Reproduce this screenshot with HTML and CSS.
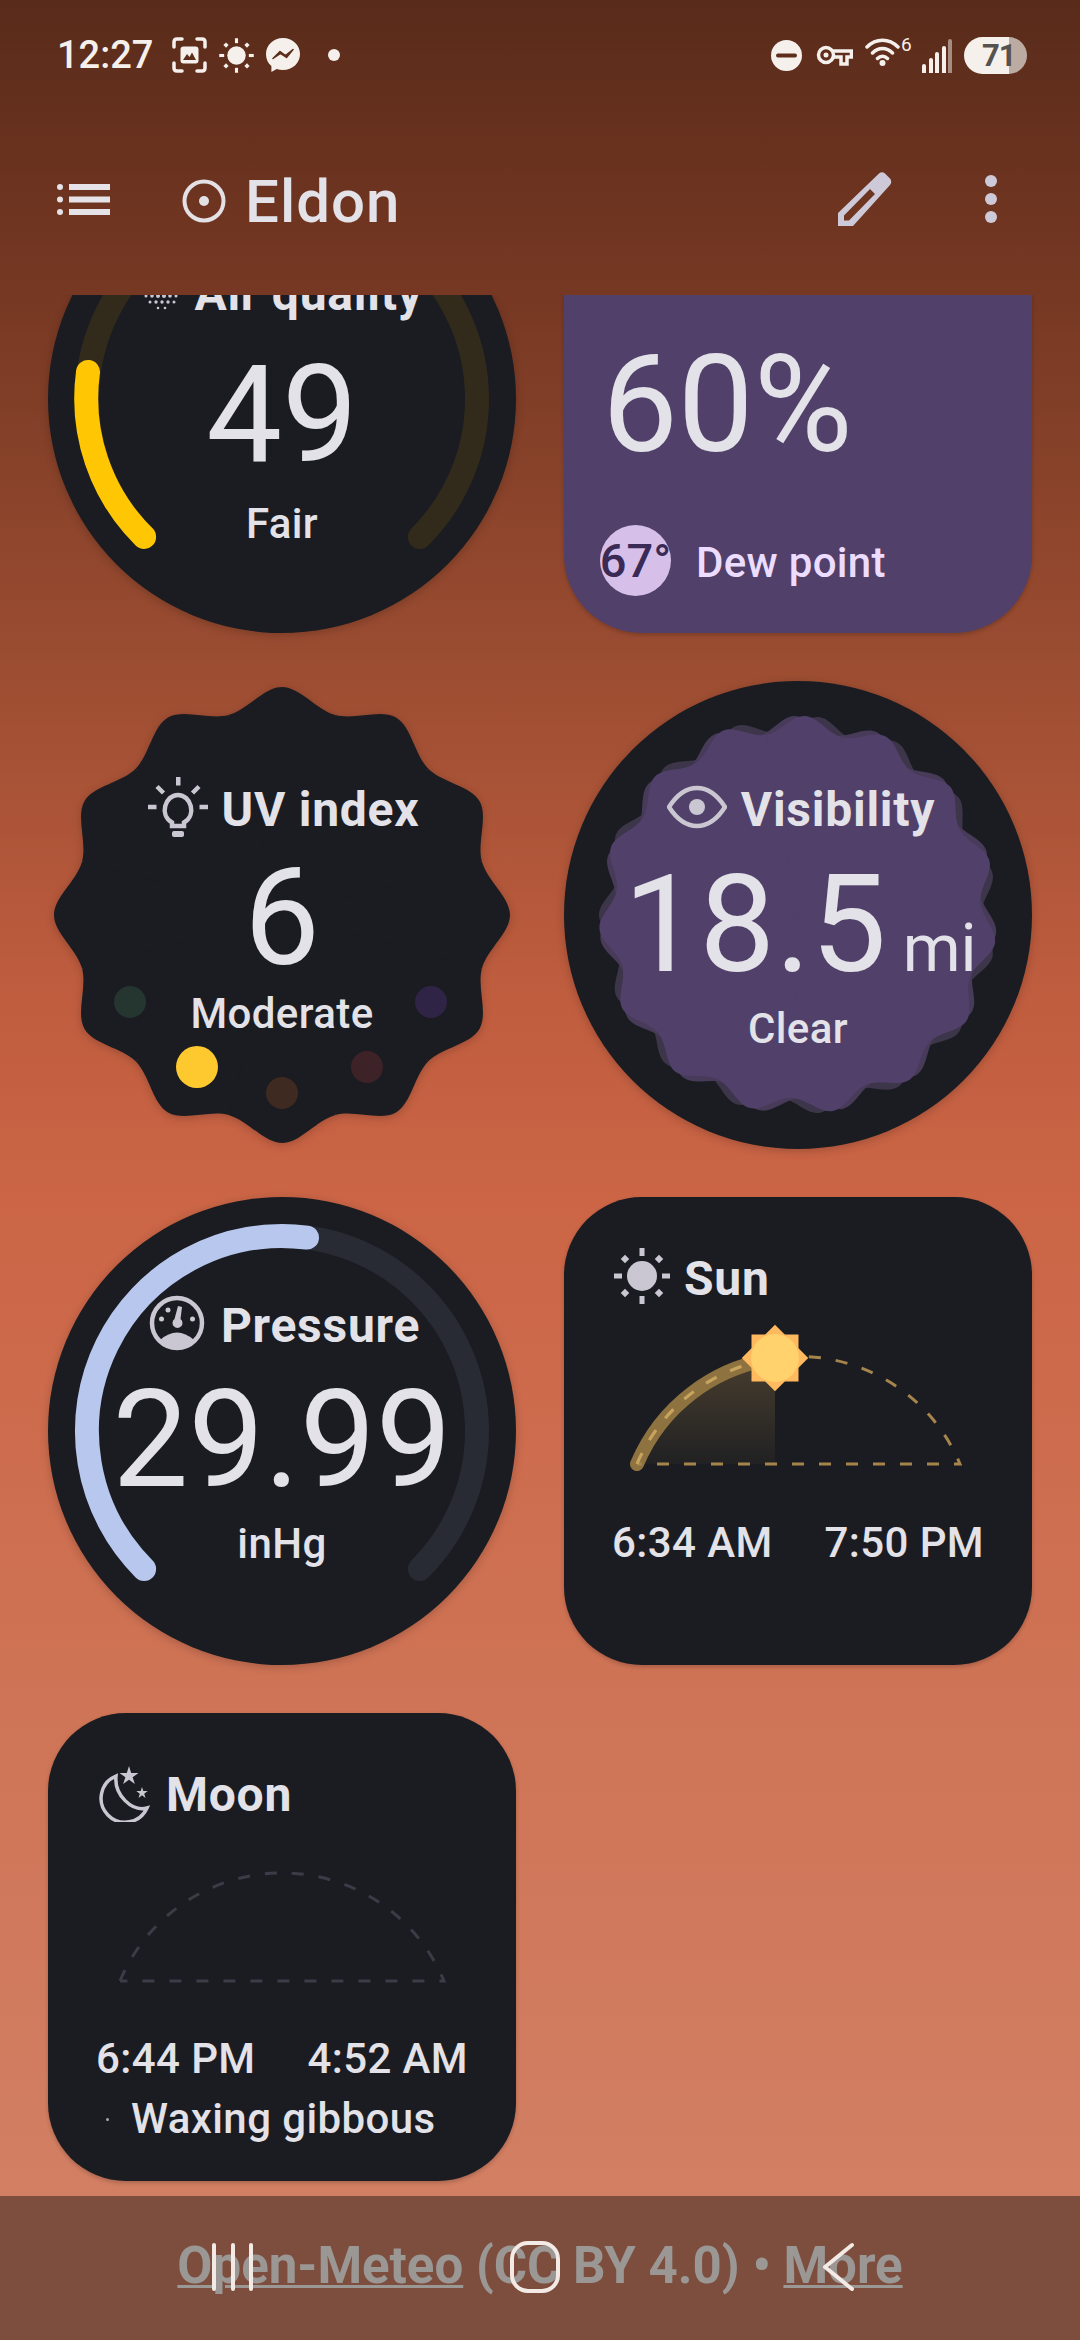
FILE: index.html
```html
<!DOCTYPE html>
<html lang="en">
<head>
  <meta charset="UTF-8" />
  <meta name="viewport" content="width=device-width, initial-scale=1.0" />
  <title>Eldon</title>
  <link rel="stylesheet" href="styles.css">
</head>
<body>
  <!-- shapes shared by the tiles -->
  <svg class="defs" width="0" height="0" aria-hidden="true">
    <defs>
      <path id="lobe-big" d="M-53.6 -199.9C-34.3 -205.1 -18 -228 0 -228C18 -228 34.3 -205.1 53.6 -199.9L0 0Z"/>
      <path id="lobe-soft" d="M-38 -179C-23.500 -182 -13 -199 0 -199C13 -199 23.500 -182 38 -179L0 0Z"/>
      <g id="burst">
        <circle r="204"/>
        <use href="#lobe-big"/><use href="#lobe-big" transform="rotate(30)"/><use href="#lobe-big" transform="rotate(60)"/>
        <use href="#lobe-big" transform="rotate(90)"/><use href="#lobe-big" transform="rotate(120)"/><use href="#lobe-big" transform="rotate(150)"/>
        <use href="#lobe-big" transform="rotate(180)"/><use href="#lobe-big" transform="rotate(210)"/><use href="#lobe-big" transform="rotate(240)"/>
        <use href="#lobe-big" transform="rotate(270)"/><use href="#lobe-big" transform="rotate(300)"/><use href="#lobe-big" transform="rotate(330)"/>
      </g>
      <g id="cloud">
        <circle r="180"/>
        <use href="#lobe-soft"/><use href="#lobe-soft" transform="rotate(24)"/><use href="#lobe-soft" transform="rotate(48)"/>
        <use href="#lobe-soft" transform="rotate(72)"/><use href="#lobe-soft" transform="rotate(96)"/><use href="#lobe-soft" transform="rotate(120)"/>
        <use href="#lobe-soft" transform="rotate(144)"/><use href="#lobe-soft" transform="rotate(168)"/><use href="#lobe-soft" transform="rotate(192)"/>
        <use href="#lobe-soft" transform="rotate(216)"/><use href="#lobe-soft" transform="rotate(240)"/><use href="#lobe-soft" transform="rotate(264)"/>
        <use href="#lobe-soft" transform="rotate(288)"/><use href="#lobe-soft" transform="rotate(312)"/><use href="#lobe-soft" transform="rotate(336)"/>
      </g>
      <g id="sun-glyph">
        <circle cx="30" cy="30" r="15"/>
        <rect x="27.5" y="2" width="5" height="8"/>
        <rect x="27.5" y="50" width="5" height="8"/>
        <rect x="2" y="27.5" width="8" height="5"/>
        <rect x="50" y="27.5" width="8" height="5"/>
        <rect x="10" y="10" width="6" height="6" transform="rotate(45 13 13)"/>
        <rect x="44" y="10" width="6" height="6" transform="rotate(45 47 13)"/>
        <rect x="10" y="44" width="6" height="6" transform="rotate(45 13 47)"/>
        <rect x="44" y="44" width="6" height="6" transform="rotate(45 47 47)"/>
      </g>
    </defs>
  </svg>

  <div class="phone">
    <!-- status bar -->
    <div class="statusbar">
      <div class="status-left">
        <span class="clock">12:27</span>
        <svg class="st-icon" width="35" height="36" viewBox="0 0 35 36">
          <path class="st-line" d="M2 10V5Q2 2 5 2H10M25 2H30Q33 2 33 5V10M33 26V31Q33 34 30 34H25M10 34H5Q2 34 2 31V26"/>
          <rect class="st-fill" x="8.5" y="9.5" width="18" height="17" rx="3"/>
          <path class="st-cut" d="M11 23L15 17L17.5 20L20 15.5L24 23Z"/>
        </svg>
        <svg class="st-icon st-sun" width="37" height="37" viewBox="0 0 60 60"><use href="#sun-glyph"/></svg>
        <svg class="st-icon" width="34" height="34" viewBox="0 0 34 34">
          <path class="st-fill" d="M17 0C7.5 0 0 7 0 16.2C0 21 2 25.200 5.400 28.100V34L10.700 31C12.600 31.600 14.700 32 17 32C26.500 32 34 25 34 16C34 7 26.500 0 17 0Z"/>
          <path class="st-cut-line" d="M7 20.500L14 13.500L19.500 17.500L27 11.500L20.500 19.500L14.500 15.500Z"/>
        </svg>
        <span class="st-dot"></span>
      </div>
      <div class="status-right">
        <svg class="st-icon" width="31" height="31" viewBox="0 0 31 31">
          <circle class="st-fill" cx="15.500" cy="15.500" r="15.500"/>
          <rect class="st-cut" x="5" y="13.500" width="21" height="4" rx="2"/>
        </svg>
        <svg class="st-icon st-key" width="37" height="24" viewBox="0 0 37 24">
          <circle class="st-line" cx="10" cy="12" r="7.500"/>
          <circle class="st-fill" cx="10" cy="12" r="2.500"/>
          <path class="st-line" d="M17.500 8H35.500V14H31V21H25V14H17.500"/>
        </svg>
        <div class="wifi">
          <svg width="35" height="31" viewBox="0 0 35 31">
            <path class="st-line" d="M2 11C11 2 24 2 33 11M7.500 17C13.500 11 21.500 11 27.500 17M12.500 22.500C15.500 19.500 19.500 19.500 22.500 22.500"/>
            <circle class="st-fill" cx="17.500" cy="27" r="3"/>
          </svg>
          <span class="wifi-num">6</span>
        </div>
        <div class="signal">
          <span class="bar bar1"></span><span class="bar bar2"></span><span class="bar bar3"></span><span class="bar bar4"></span><span class="bar bar5"></span>
        </div>
        <div class="battery"><span class="battery-num">71</span></div>
      </div>
    </div>

    <!-- app bar -->
    <div class="appbar">
      <svg class="menu-icon" width="53" height="31" viewBox="0 0 53 31">
        <circle cx="3" cy="3" r="3"/><circle cx="3" cy="15.500" r="3"/><circle cx="3" cy="28" r="3"/>
        <rect x="12" y="0" width="41" height="6"/><rect x="12" y="12.500" width="41" height="6"/><rect x="12" y="25" width="41" height="6"/>
      </svg>
      <svg class="place-icon" width="44" height="44" viewBox="0 0 44 44">
        <circle class="place-ring" cx="22" cy="22" r="19.500"/>
        <circle class="place-dot" cx="22" cy="22" r="5"/>
      </svg>
      <span class="place-name">Eldon</span>
      <svg class="pencil" width="54" height="54" viewBox="0 0 54 54">
        <path fill-rule="evenodd" d="M0 54V41L41 1.500Q44 -1 47 1.500L52 6.500Q54.500 9.500 52 13L15 54ZM6 43.500V48.500H11L37 22L32 17Z"/>
      </svg>
      <svg class="more" width="12" height="48" viewBox="0 0 12 48">
        <circle cx="6" cy="6" r="6"/><circle cx="6" cy="24" r="6"/><circle cx="6" cy="42" r="6"/>
      </svg>
    </div>

    <!-- scrolled tiles -->
    <div class="scroller">
      <div class="tiles">

        <div class="tile tile-aqi">
          <svg class="tile-bg" viewBox="0 0 468 468">
            <circle class="fill-dark" cx="234" cy="234" r="234"/>
            <path class="arc-aqi-track" d="M96.100 371.900A195 195 0 1 1 371.900 371.900"/>
            <path class="arc-aqi" d="M96.100 371.900A195 195 0 0 1 40 207"/>
          </svg>
          <div class="tile-title">
            <svg class="tile-icon tile-icon-narrow" width="36" height="60" viewBox="0 0 36 60">
              <g class="ico-fill">
                <circle cx="2" cy="35" r="1.500"/><circle cx="8" cy="35" r="1.800"/><circle cx="14" cy="35" r="2"/><circle cx="20" cy="35" r="2"/><circle cx="26" cy="35" r="1.800"/><circle cx="32" cy="35" r="1.500"/>
                <circle cx="6" cy="41" r="1.500"/><circle cx="12" cy="41" r="1.700"/><circle cx="18" cy="41" r="1.700"/><circle cx="24" cy="41" r="1.700"/><circle cx="30" cy="41" r="1.500"/>
                <circle cx="14" cy="47" r="1.300"/><circle cx="21" cy="47" r="1.300"/>
              </g>
            </svg>
            <span>Air quality</span>
          </div>
          <div class="tile-value">49</div>
          <div class="tile-label">Fair</div>
        </div>

        <div class="tile tile-humidity">
          <div class="humidity-value">60%</div>
          <div class="dew">
            <span class="dew-badge">67°</span>
            <span class="dew-text">Dew point</span>
          </div>
        </div>

        <div class="tile tile-uv">
          <svg class="tile-bg" viewBox="0 0 468 468">
            <use class="fill-dark" href="#burst" transform="translate(234 234)"/>
            <circle class="uv-green" cx="82" cy="321" r="16"/>
            <circle class="uv-yellow" cx="149" cy="386" r="21"/>
            <circle class="uv-brown" cx="234" cy="412" r="16"/>
            <circle class="uv-red" cx="319" cy="386" r="16"/>
            <circle class="uv-purple" cx="383" cy="321" r="16"/>
          </svg>
          <div class="tile-title">
            <svg class="tile-icon" width="60" height="60" viewBox="0 0 60 60">
              <rect class="ico-fill" x="28" y="0" width="4.500" height="8.500"/>
              <path class="ico-line" d="M9 9.500L15.500 16M51 9.500L44.500 16M0 30H8.500M51.500 30H60"/>
              <path class="ico-line" d="M24 49V45.500C11 38 17 18 30 18C43 18 49 38 36 45.500V49Z"/>
              <rect class="ico-fill" x="24" y="54" width="12" height="6" rx="2"/>
            </svg>
            <span>UV index</span>
          </div>
          <div class="tile-value">6</div>
          <div class="tile-label">Moderate</div>
        </div>

        <div class="tile tile-vis">
          <svg class="tile-bg" viewBox="0 0 468 468">
            <circle class="fill-dark" cx="234" cy="234" r="234"/>
            <use class="cloud-back" href="#cloud" transform="translate(234 234) rotate(6)"/>
            <use class="cloud-mid" href="#cloud" transform="translate(234 234) rotate(-1)"/>
            <use class="cloud-front" href="#cloud" transform="translate(234 234) rotate(2)"/>
          </svg>
          <div class="tile-title">
            <svg class="tile-icon" width="60" height="60" viewBox="0 0 60 60">
              <path class="ico-line" d="M2 30C11 16 20 11 30 11C40 11 49 16 58 30C49 44 40 49 30 49C20 49 11 44 2 30Z"/>
              <circle class="ico-fill" cx="30" cy="30" r="8"/>
            </svg>
            <span>Visibility</span>
          </div>
          <div class="tile-value">18.5<span class="tile-unit">mi</span></div>
          <div class="tile-label">Clear</div>
        </div>

        <div class="tile tile-pressure">
          <svg class="tile-bg" viewBox="0 0 468 468">
            <circle class="fill-dark" cx="234" cy="234" r="234"/>
            <path class="arc-pr-track" d="M96.100 371.900A195 195 0 1 1 371.900 371.900"/>
            <path class="arc-pr" d="M96.100 371.900A195 195 0 0 1 259 40.600"/>
          </svg>
          <div class="tile-title">
            <svg class="tile-icon" width="60" height="60" viewBox="0 0 60 60">
              <circle class="ico-line" cx="30" cy="30" r="25"/>
              <path class="ico-fill" d="M13 47Q30 32 47 47A25 25 0 0 1 13 47Z"/>
              <path class="ico-fill" d="M31 13L35 14L33.500 26A5 5 0 1 1 27.500 26Z"/>
              <circle class="ico-fill" cx="14.500" cy="26" r="2.500"/>
              <circle class="ico-fill" cx="21" cy="17" r="2.500"/>
              <circle class="ico-fill" cx="45.500" cy="26" r="2.500"/>
            </svg>
            <span>Pressure</span>
          </div>
          <div class="tile-value">29.99</div>
          <div class="tile-label">inHg</div>
        </div>

        <div class="tile card">
          <div class="card-title">
            <svg class="tile-icon" width="60" height="60" viewBox="0 0 60 60"><use class="ico-fill" href="#sun-glyph"/></svg>
            <span>Sun</span>
          </div>
          <svg class="sky" width="372" height="180" viewBox="0 0 372 180">
            <defs>
              <linearGradient id="sun-wash" x1="0" y1="0" x2="0" y2="1">
                <stop offset="0" stop-color="#ffc35e" stop-opacity="0.2"/>
                <stop offset="1" stop-color="#ffc35e" stop-opacity="0.03"/>
              </linearGradient>
            </defs>
            <path fill="url(#sun-wash)" d="M25 144A175 175 0 0 1 163 38.600V144Z"/>
            <path class="sun-done" d="M25 144A175 175 0 0 1 163 38.600"/>
            <path class="sun-dash" d="M25 144A175 175 0 0 1 348 144H25"/>
            <path class="sun-dash-done" d="M25 144A175 175 0 0 1 163 38.600"/>
            <rect class="sun-rays" x="139.500" y="14.500" width="47" height="47"/>
            <rect class="sun-rays" x="139.500" y="14.500" width="47" height="47" transform="rotate(45 163 38)"/>
            <circle class="sun-disc" cx="163" cy="38" r="24"/>
          </svg>
          <div class="times"><span>6:34 AM</span><span>7:50 PM</span></div>
        </div>

        <div class="tile card card-moon">
          <div class="card-title">
            <svg class="tile-icon" width="60" height="60" viewBox="0 0 60 60">
              <path class="ico-line ico-moon" d="M20 14A24 24 0 1 0 51 46C36 50 18 33 20 14Z"/>
              <polygon class="ico-fill" points="33,4 35.200,11 42.500,11 36.600,15.200 38.900,22 33,17.800 27.100,22 29.400,15.200 23.500,11 30.800,11"/>
              <polygon class="ico-fill" points="46,25 47.300,29.100 51.700,29.100 48.200,31.700 49.500,35.900 46,33.300 42.500,35.900 43.800,31.700 40.300,29.100 44.700,29.100"/>
            </svg>
            <span>Moon</span>
          </div>
          <svg class="sky" width="372" height="180" viewBox="0 0 372 180">
            <path class="moon-dash" d="M24 145A175.500 175.500 0 0 1 348 145H24"/>
          </svg>
          <div class="times"><span>6:44 PM</span><span>4:52 AM</span></div>
          <div class="phase"><span class="phase-dot"></span><span>Waxing gibbous</span></div>
        </div>

      </div>
    </div>

    <!-- attribution + system keys -->
    <div class="footer">
      <div class="credit"><a class="credit-link">Open-Meteo</a> (CC BY 4.0) • <a class="credit-link">More</a></div>
      <svg class="navkeys" viewBox="0 0 1080 144">
        <path d="M214 49V93M233 49V93M251 49V93"/>
        <rect x="512" y="47" width="46" height="48" rx="16"/>
        <path d="M852 49L825 71L852 93"/>
      </svg>
    </div>
  </div>
</body>
</html>
```

FILE: styles.css
```css
* {
  box-sizing: border-box;
}
body {
  margin: 0;
  font-family: Roboto, sans-serif;
  color: #e3e2e8;
}
.defs {
  position: absolute;
}
.phone {
  width: 1080px;
  height: 2340px;
  display: flex;
  flex-direction: column;
  overflow: hidden;
  background: linear-gradient(180deg, #592b1a 0, #763823 290px, #9a4c31 650px, #c05d3f 1000px, #cb6546 1200px, #cf7456 1700px, #d27f63 2196px);
}

/* status bar */
.statusbar {
  height: 110px;
  flex: none;
  display: flex;
  align-items: center;
  justify-content: space-between;
  padding: 0 53px 0 57px;
  color: #f6f0ec;
}
.status-left, .status-right {
  display: flex;
  align-items: center;
}
.clock {
  font-size: 38px;
  font-weight: 500;
  margin-right: 19px;
}
.st-icon {
  display: block;
}
.st-sun {
  margin-left: 11px;
  fill: #f6f0ec;
}
.st-icon + .st-icon {
  margin-left: 11px;
}
.st-fill {
  fill: #f6f0ec;
}
.st-line {
  fill: none;
  stroke: #f6f0ec;
  stroke-width: 3.5;
  stroke-linecap: round;
}
.st-cut {
  fill: #5d2d1b;
}
.st-cut-line {
  fill: #5d2d1b;
  stroke: #5d2d1b;
  stroke-width: 1.5;
  stroke-linejoin: round;
}
.st-dot {
  width: 12px;
  height: 12px;
  margin-left: 28px;
  border-radius: 50%;
  background: #f6f0ec;
}
.st-key {
  margin-left: 14px !important;
}
.wifi {
  display: flex;
  margin-left: 12px;
  height: 38px;
  width: 46px;
  position: relative;
}
.wifi-num {
  position: absolute;
  left: 36px;
  top: -1px;
  font-size: 19px;
  line-height: 20px;
}
.signal {
  display: flex;
  align-items: flex-end;
  gap: 2.5px;
  height: 34px;
  margin-left: 11px;
  margin-top: 2px;
}
.bar {
  width: 4px;
  background: #f6f0ec;
  border-radius: 2px 2px 0 0;
}
.bar1 { height: 9px; }
.bar2 { height: 15px; }
.bar3 { height: 21px; }
.bar4 { height: 27px; }
.bar5 { height: 34px; background: #a78c80; }
.battery {
  width: 63px;
  height: 37px;
  margin-left: 12px;
  border-radius: 19px;
  background: linear-gradient(90deg, #f6f0ec 0, #f6f0ec 45px, #bcaba3 45px);
  padding-left: 18px;
  display: flex;
  align-items: center;
}
.battery-num {
  font-size: 31px;
  font-weight: 700;
  letter-spacing: -1px;
  color: #55524f;
}

/* app bar */
.appbar {
  height: 185px;
  flex: none;
  display: flex;
  align-items: center;
  padding: 0 84px 3px 57px;
}
.menu-icon {
  fill: #e6e3e8;
  margin-right: 72px;
  margin-top: -3px;
}
.place-icon {
  margin-right: 19px;
}
.place-ring {
  fill: none;
  stroke: #e3e1e6;
  stroke-width: 4;
}
.place-dot {
  fill: #e3e1e6;
}
.place-name {
  font-size: 60px;
  font-weight: 500;
  letter-spacing: 1px;
  flex: 1;
  color: #e3e2e8;
}
.pencil {
  fill: #cdc9d8;
  margin-right: 93px;
  margin-top: -4px;
}
.more {
  fill: #cdc9d8;
  margin-top: -4px;
  margin-right: -1px;
}

/* tiles */
.scroller {
  flex: 1;
  overflow: hidden;
}
.tiles {
  margin-top: -130px;
  padding: 0 48px;
  display: grid;
  grid-template-columns: 468px 468px;
  grid-auto-rows: 468px;
  gap: 48px;
}
.tile {
  position: relative;
  display: flex;
  flex-direction: column;
  align-items: center;
  padding-top: 99px;
}
.tile-bg {
  position: absolute;
  left: 0;
  top: 0;
  width: 468px;
  height: 468px;
  filter: drop-shadow(0 2px 4px rgba(0, 0, 0, 0.2));
}
.fill-dark {
  fill: #1a1c21;
}
.tile-title, .card-title {
  position: relative;
  display: flex;
  align-items: center;
  gap: 14px;
  height: 60px;
  font-size: 48px;
  letter-spacing: 0.75px;
  line-height: 60px;
  font-weight: 700;
  white-space: nowrap;
}
.tile-title {
  margin-left: 3px;
}
.tile-icon {
  flex: none;
  margin-bottom: 6px;
}
.ico-fill {
  fill: #cbc7d2;
}
.ico-line {
  fill: none;
  stroke: #cbc7d2;
  stroke-width: 4.5;
}
.ico-moon {
  stroke-width: 3.5;
}
.tile-value {
  position: relative;
  font-size: 135px;
  line-height: 135px;
  margin-top: 17px;
  white-space: nowrap;
}
.tile-label {
  position: relative;
  font-size: 42px;
  font-weight: 500;
  letter-spacing: 0.4px;
  line-height: 54px;
  margin-top: 9px;
}
.tile-unit {
  font-size: 66px;
  line-height: 60px;
  margin-left: 16px;
}
.tile-aqi .tile-value {
  margin-top: 24px;
}
.tile-aqi .tile-label {
  margin-top: 14px;
}
.tile-uv .tile-value {
  margin-top: 11px;
}
.tile-uv .tile-label {
  margin-top: 1px;
}
.tile-vis .tile-title {
  margin-left: 6px;
}
.tile-vis .tile-value {
  margin-top: 18px;
  margin-left: 4px;
}

/* gauge arcs */
.arc-aqi-track, .arc-aqi, .arc-pr-track, .arc-pr {
  fill: none;
  stroke-width: 24;
  stroke-linecap: round;
}
.arc-aqi-track { stroke: #322b1c; }
.arc-aqi { stroke: #ffc604; }
.arc-pr-track { stroke: #292b34; }
.arc-pr { stroke: #b7c7ee; }

/* uv dots */
.uv-green { fill: #25352f; }
.uv-yellow { fill: #fdc92f; }
.uv-brown { fill: #3f2a21; }
.uv-red { fill: #3d2327; }
.uv-purple { fill: #2f2445; }

/* visibility blobs */
.cloud-back { fill: #3d3549; }
.cloud-mid { fill: #473b59; }
.cloud-front { fill: #51406a; }

/* humidity */
.tile-humidity {
  background: #51406a;
  border-radius: 78px;
  align-items: flex-start;
  padding: 173px 36px 0;
  box-shadow: 0 2px 4px rgba(0, 0, 0, 0.2);
}
.humidity-value {
  font-size: 135px;
  line-height: 135px;
  margin-left: 2px;
}
.dew {
  display: flex;
  align-items: center;
  gap: 25px;
  margin-top: 52px;
}
.dew-badge {
  width: 71px;
  height: 71px;
  border-radius: 50%;
  background: #d6bfe9;
  color: #3a2a55;
  font-size: 47px;
  font-weight: 500;
  line-height: 71px;
  display: flex;
  justify-content: center;
  white-space: nowrap;
}
.dew-text {
  font-size: 42px;
  font-weight: 500;
  letter-spacing: 0.3px;
  color: #ecdcff;
  margin-top: 4px;
}

/* sun and moon cards */
.card {
  background: #1a1c21;
  border-radius: 78px;
  align-items: stretch;
  padding: 52px 48px 0;
  box-shadow: 0 2px 4px rgba(0, 0, 0, 0.2);
}
.card-title {
  gap: 12px;
}
.card-moon .card-title {
  gap: 10px;
}
.sky {
  display: block;
  margin-top: 11px;
  overflow: visible;
}
.times {
  display: flex;
  justify-content: space-between;
  margin-top: 16px;
  font-size: 42px;
  font-weight: 500;
  letter-spacing: 0.4px;
  line-height: 54px;
}
.phase {
  display: flex;
  align-items: center;
  gap: 22px;
  margin-top: 6px;
  padding-left: 10px;
  font-size: 42px;
  font-weight: 500;
  letter-spacing: 0.4px;
  line-height: 54px;
}
.phase-dot {
  width: 3px;
  height: 3px;
  border-radius: 50%;
  background: #a9a8ad;
}
.sun-done {
  fill: none;
  stroke: #8e7240;
  stroke-width: 14;
  stroke-linecap: round;
}
.sun-dash {
  fill: none;
  stroke: #a5854c;
  stroke-width: 3;
  stroke-dasharray: 12 15;
}
.sun-dash-done {
  fill: none;
  stroke: #c8a55e;
  stroke-width: 3;
  stroke-dasharray: 12 15;
}
.sun-rays { fill: #ffb95e; }
.sun-disc { fill: #ffd26e; }
.moon-dash {
  fill: none;
  stroke: #3a3d47;
  stroke-width: 3;
  stroke-dasharray: 12 15;
}

/* footer */
.footer {
  position: relative;
  height: 144px;
  flex: none;
  background: #7d4e3e;
  padding-top: 42px;
  text-align: center;
}
.credit {
  font-size: 51px;
  line-height: 56px;
  font-weight: 700;
  color: #9b9795;
  white-space: nowrap;
}
.credit-link {
  text-decoration: underline;
  text-decoration-thickness: 3px;
}
.navkeys {
  position: absolute;
  left: 0;
  top: 0;
  width: 1080px;
  height: 144px;
  fill: none;
  stroke: #f3e9e5;
  stroke-width: 4;
  stroke-linecap: round;
  stroke-linejoin: round;
}
```
